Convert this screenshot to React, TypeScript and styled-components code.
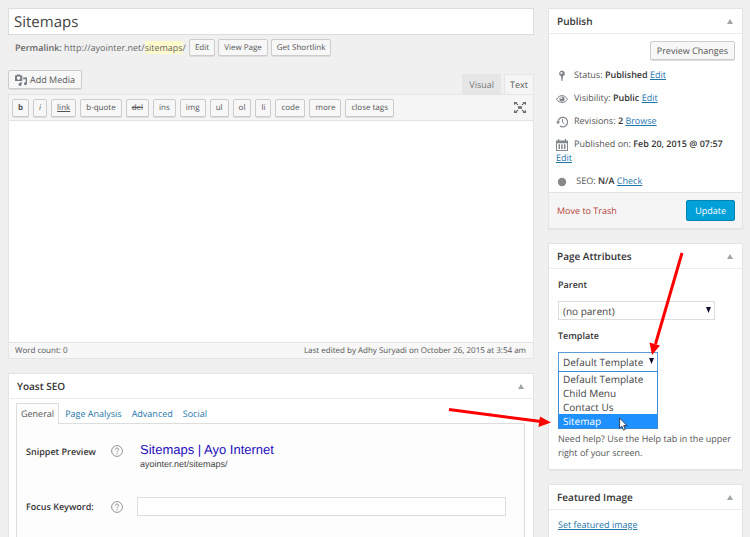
import React from 'react';
import styled, { createGlobalStyle, css } from 'styled-components';

const GlobalStyle = createGlobalStyle`
  *, *::before, *::after { box-sizing: border-box; }
  body {
    margin: 0;
    background: #f0f0f0;
    color: #555;
    font-family: 'Open Sans', 'Noto Sans', sans-serif;
    font-size: 9px;
    line-height: 14px;
    text-rendering: geometricPrecision;
  }
  button, input, select, textarea { font: inherit; color: inherit; margin: 0; text-rendering: inherit; }
  h2, p, ul { margin: 0; padding: 0; }
  ul { list-style: none; }
`;

const Page = styled.div`
  display: grid;
  grid-template-columns: minmax(0, 1fr) 195px;
  align-items: start;
  gap: 14px;
  height: 100vh;
  padding: 8px 7px 0 8px;
  overflow: hidden;
`;

const Column = styled.div`
  display: flex;
  flex-direction: column;
  gap: 14px;
`;

const PostForm = styled.div`
  display: flex;
  flex-direction: column;
`;

const TitleInput = styled.input`
  width: 100%;
  height: 27px;
  padding: 0 5px;
  border: 1px solid #ddd;
  background: #fff;
  color: #444;
  font-size: 15px;
`;

const PermalinkRow = styled.div`
  display: flex;
  align-items: center;
  gap: 3px;
  margin-top: 4px;
  padding-left: 7px;
  color: #666;
  strong { font-weight: 600; }
`;

const Slug = styled.span`
  background: #fffbcc;
`;

type ButtonSize = 'tiny' | 'quick' | 'normal';

const buttonSizes = {
  tiny: css`height: 17px; padding: 0 5px; font-size: 8px;`,
  quick: css`height: 18px; padding: 0 5px; font-size: 8px;`,
  normal: css`height: 19px; padding: 0 6px;`,
};

const Button = styled.button<{ $size: ButtonSize; $look?: 'bold' | 'italic' | 'link' | 'del' }>`
  display: inline-flex;
  align-items: center;
  gap: 3px;
  flex: none;
  border: 1px solid #ccc;
  border-radius: 2px;
  background: #f7f7f7;
  box-shadow: 0 1px 0 #ddd;
  color: #555;
  white-space: nowrap;
  ${({ $size }) => buttonSizes[$size]}
  ${({ $look }) => $look === 'bold' && css`font-weight: 700;`}
  ${({ $look }) => $look === 'italic' && css`font-style: italic;`}
  ${({ $look }) => $look === 'link' && css`text-decoration: underline;`}
  ${({ $look }) => $look === 'del' && css`text-decoration: line-through;`}
`;

const EditorTop = styled.div`
  display: flex;
  justify-content: space-between;
  align-items: flex-end;
  margin-top: 14px;
`;

const MediaSlot = styled.div`
  height: 24px;
`;

const EditorTabs = styled.div`
  display: flex;
  gap: 3px;
`;

const EditorTab = styled.button<{ $active?: boolean }>`
  height: 20px;
  padding: 0 ${({ $active }) => ($active ? 5 : 6)}px;
  border: 1px solid ${({ $active }) => ($active ? '#e5e5e5' : '#e6e6e6')};
  border-bottom: 0;
  background: ${({ $active }) => ($active ? '#f5f5f5' : '#e6e6e6')};
  color: ${({ $active }) => ($active ? '#555' : '#777')};
`;

const Editor = styled.div`
  display: flex;
  flex-direction: column;
  border: 1px solid #e5e5e5;
  background: #fff;
`;

const Toolbar = styled.div`
  display: flex;
  align-items: center;
  gap: 4px;
  height: 26px;
  padding: 0 7px 0 3px;
  border-bottom: 1px solid #e2e2e2;
  background: #f5f5f5;
`;

const FullscreenButton = styled.button`
  display: flex;
  margin-left: auto;
  padding: 0;
  border: 0;
  background: none;
`;

const EditorText = styled.textarea`
  display: block;
  height: 221px;
  padding: 6px;
  border: 0;
  resize: none;
  background: #fff;
  outline: 0;
`;

const EditorStatus = styled.div`
  display: flex;
  justify-content: space-between;
  padding: 1px 7px 0 6px;
  border-top: 1px solid #e2e2e2;
  background: #f7f7f7;
  color: #555;
  font-size: 8px;
`;

const Panel = styled.section`
  border: 1px solid #e4e4e4;
  background: #fff;
  box-shadow: 0 1px 1px rgba(0, 0, 0, 0.04);
`;

const PanelHeader = styled.header`
  display: flex;
  align-items: center;
  justify-content: space-between;
  height: 25px;
  padding: 0 9px 0 8px;
  border-bottom: 1px solid #ececec;
`;

const PanelTitle = styled.h2`
  color: #333;
  font-size: 10px;
  font-weight: 600;
`;

const Toggle = styled.button`
  display: flex;
  padding: 0;
  border: 0;
  background: none;
`;

const Link = styled.a<{ $danger?: boolean }>`
  color: ${({ $danger }) => ($danger ? '#b5423a' : '#1f76ab')};
  text-decoration: ${({ $danger }) => ($danger ? 'none' : 'underline')};
`;

const SeoBody = styled.div`
  padding: 4px 8px 0 7px;
`;

const SeoTabs = styled.nav`
  display: flex;
  gap: 8px;
`;

const SeoTab = styled.a<{ $active?: boolean }>`
  position: relative;
  margin-bottom: -1px;
  padding: 3px 0 3px;
  border: 1px solid transparent;
  border-bottom: 0;
  color: #1f76ab;
  text-decoration: none;
  ${({ $active }) =>
    $active &&
    css`
      padding: 3px 4px;
      margin-right: -3px;
      border-color: #ddd;
      background: #fdfdfd;
      color: #555;
    `}
`;

const SeoFields = styled.div`
  display: flex;
  flex-direction: column;
  gap: 26px;
  height: 160px;
  padding: 19px 18px 0 9px;
  border: 1px solid #ddd;
  background: #fdfdfd;
`;

const SeoRow = styled.div<{ $top?: boolean }>`
  display: grid;
  grid-template-columns: 85px 26px minmax(0, 1fr);
  align-items: ${({ $top }) => ($top ? 'start' : 'center')};
  svg { margin-top: ${({ $top }) => ($top ? 2 : 0)}px; }
`;

const SeoLabel = styled.label`
  color: #333;
  font-weight: 600;
`;

const SeoCaption = styled.span`
  padding-top: 2px;
  color: #333;
  font-weight: 600;
`;

const Snippet = styled.div`
  padding-left: 3px;
  font-family: 'Liberation Sans', Arial, sans-serif;
  color: #444;
`;

const SnippetTitle = styled.a`
  display: block;
  color: #1e0fbe;
  font-size: 13px;
  text-decoration: none;
`;

const KeywordInput = styled.input`
  height: 19px;
  width: 100%;
  border: 1px solid #ddd;
  background: #fff;
`;

const PublishBody = styled.div`
  display: flex;
  flex-direction: column;
  gap: 9px;
  padding: 7px 7px 4px;
`;

const PreviewRow = styled.div`
  display: flex;
  justify-content: flex-end;
  margin-bottom: -1px;
`;

const MetaRow = styled.div`
  line-height: 14px;
  svg { display: inline-block; vertical-align: -3px; margin: -1px 6px -1px 0; }
  strong { color: #333; font-weight: 600; }
`;

const PublishFooter = styled.footer`
  display: flex;
  align-items: center;
  justify-content: space-between;
  height: 36px;
  padding: 0 7px 0 8px;
  border-top: 1px solid #e2e2e2;
  background: #f5f5f5;
`;

const PrimaryButton = styled.button`
  height: 21px;
  padding: 0 8px;
  border: 1px solid #0084b4;
  border-radius: 2px;
  background: #00a0d8;
  color: #fff;
`;

const AttributesBody = styled.div`
  display: flex;
  flex-direction: column;
  align-items: flex-start;
  padding: 9px 8px 9px 9px;
`;

const FieldLabel = styled.label`
  margin-bottom: 9px;
  color: #333;
  font-weight: 600;
`;

const SelectField = styled.div<{ $wide?: boolean }>`
  position: relative;
  width: ${({ $wide }) => ($wide ? '157px' : '100px')};
  margin-bottom: ${({ $wide }) => ($wide ? '9px' : '60px')};
`;

const Select = styled.select<{ $focused?: boolean }>`
  display: block;
  width: 100%;
  height: ${({ $focused }) => ($focused ? 20 : 19)}px;
  padding: 0 4px;
  appearance: none;
  border: 1px solid ${({ $focused }) => ($focused ? '#5b9dd9' : '#ddd')};
  border-radius: 0;
  background: #fff;
  color: #444;
  font-size: 10px;
`;

const SelectArrow = styled.svg`
  position: absolute;
  right: 4px;
  top: 6px;
  pointer-events: none;
`;

const Options = styled.ul`
  position: absolute;
  top: 100%;
  left: 0;
  right: 0;
  margin-top: -1px;
  border: 1px solid #3c8bd6;
  background: #fff;
  font-size: 10px;
`;

const Option = styled.li<{ $selected?: boolean }>`
  padding: 0 4px;
  background: ${({ $selected }) => ($selected ? '#1e90ff' : '#fff')};
  color: ${({ $selected }) => ($selected ? '#fff' : '#444')};
`;

const Pointer = styled.svg`
  position: absolute;
  left: 61px;
  top: 65px;
`;

const ArrowDown = styled.svg`
  position: absolute;
  left: 90px;
  top: -100px;
  z-index: 2;
  pointer-events: none;
`;

const ArrowRight = styled.svg`
  position: absolute;
  left: -111px;
  top: 53px;
  z-index: 2;
  pointer-events: none;
`;

const FeaturedBody = styled.div`
  padding: 8px 9px 40px;
`;

const UpIcon = () => (
  <svg width="6" height="5" viewBox="0 0 6 5" aria-hidden="true">
    <path d="M3 0 6 5H0Z" fill="#a0a5aa" />
  </svg>
);

const DownIcon = () => (
  <SelectArrow width="5" height="6" viewBox="0 0 5 6" aria-hidden="true">
    <path d="M0 0h5L2.5 6Z" fill="#111133" />
  </SelectArrow>
);

const MediaIcon = () => (
  <svg width="12" height="12" viewBox="0 0 12 12" aria-hidden="true">
    <path fillRule="evenodd" fill="#777c82" d="M0 1.5h1.3L2 .5h3l.7 1h1.6V7H0ZM3.6 2.3a1.8 1.8 0 1 0 0 3.6 1.8 1.8 0 0 0 0-3.6Z" />
    <path fill="#777c82" d="M8.2 3.4H12V9.7a1.5 1.5 0 1 1-1.3-1.5V5.2H8.2ZM5.3 8h1.3v2.5A1.5 1.5 0 1 1 5.3 9Z" />
  </svg>
);

const FullscreenIcon = () => (
  <svg width="12" height="11" viewBox="0 0 12 11" fill="#666" aria-hidden="true">
    <path d="M0 0h3.4L2.5.9l1.9 1.7-.8.8-1.9-1.8L0 3.2ZM12 0v3.2l-1.7-1.6-1.9 1.8-.8-.8L9.5.9 8.6 0ZM0 11V7.8l1.7 1.6 1.9-1.8.8.8-1.9 1.7.9.9ZM12 11H8.6l.9-.9-1.9-1.7.8-.8 1.9 1.8L12 7.8ZM4 4.2h4v2.6H4Z" />
  </svg>
);

const PinIcon = () => (
  <svg width="12" height="12" viewBox="0 0 12 12" fill="#82878c" aria-hidden="true">
    <path fillRule="evenodd" d="M6 .5a3 3 0 0 1 1 5.8L6.5 11h-1L5 6.3A3 3 0 0 1 6 .5ZM5.4 2a1 1 0 1 0 0 2 1 1 0 0 0 0-2Z" />
  </svg>
);

const EyeIcon = () => (
  <svg width="12" height="12" viewBox="0 0 12 12" fill="none" stroke="#82878c" aria-hidden="true">
    <path d="M.5 6.2C3.2 1.4 8.8 1.4 11.5 6.2 8.8 10.6 3.2 10.6.5 6.2Z" />
    <circle cx="6" cy="6" r="2.6" fill="#82878c" stroke="none" />
    <circle cx="5.2" cy="5" r=".9" fill="#fff" stroke="none" />
  </svg>
);

const HistoryIcon = () => (
  <svg width="12" height="12" viewBox="0 0 12 12" fill="none" stroke="#82878c" aria-hidden="true">
    <path d="M2 6A4.8 4.8 0 1 1 4 10" strokeWidth="1.2" />
    <path d="M6.5 3v3.2l2 1.8" />
    <path d="M0 5.5h4.2L2 8.2Z" fill="#82878c" stroke="none" />
  </svg>
);

const CalendarIcon = () => (
  <svg width="12" height="12" viewBox="0 0 12 12" fill="#82878c" aria-hidden="true">
    <path fillRule="evenodd" d="M0 1.5h2V0h1.2v1.5h5.6V0H10v1.5h2V12H0ZM1 4.2V11h10V4.2Z" />
    <path d="M2.5 5.2H4V10H2.5ZM5.2 5.2h1.5V10H5.2ZM8 5.2h1.5V10H8Z" />
  </svg>
);

const DotIcon = () => (
  <svg width="12" height="12" viewBox="0 0 12 12" aria-hidden="true">
    <circle cx="6" cy="6" r="4.2" fill="#888" />
  </svg>
);

const HelpIcon = () => (
  <svg width="12" height="12" viewBox="0 0 12 12" fill="none" stroke="#888" aria-hidden="true">
    <circle cx="6" cy="6" r="5.4" strokeWidth=".9" />
    <path d="M4.3 4.6C4.4 2.5 7.7 2.6 7.6 4.6 7.5 5.6 6 5.8 6 7.2" />
    <path d="M6 8.2v1" />
  </svg>
);

type QuickTag = { text: string; look?: 'bold' | 'italic' | 'link' | 'del' };

const quickTags: QuickTag[] = [
  { text: 'b', look: 'bold' },
  { text: 'i', look: 'italic' },
  { text: 'link', look: 'link' },
  { text: 'b-quote' },
  { text: 'del', look: 'del' },
  { text: 'ins' },
  { text: 'img' },
  { text: 'ul' },
  { text: 'ol' },
  { text: 'li' },
  { text: 'code' },
  { text: 'more' },
  { text: 'close tags' },
];

const templates = ['Default Template', 'Child Menu', 'Contact Us', 'Sitemap'];

const Header = ({ title }: { title: string }) => (
  <PanelHeader>
    <PanelTitle>{title}</PanelTitle>
    <Toggle type="button" aria-label={`Toggle panel: ${title}`}>
      <UpIcon />
    </Toggle>
  </PanelHeader>
);

export default function App() {
  return (
    <>
      <GlobalStyle />
      <Page>
        <Column as="main">
          <PostForm>
            <TitleInput aria-label="Title" defaultValue="Sitemaps" />
            <PermalinkRow>
              <span>
                <strong>Permalink:</strong> http://ayointer.net/<Slug>sitemaps</Slug>/
              </span>
              <Button type="button" $size="tiny">Edit</Button>
              <Button type="button" $size="tiny">View Page</Button>
              <Button type="button" $size="tiny">Get Shortlink</Button>
            </PermalinkRow>
            <EditorTop>
              <MediaSlot>
                <Button type="button" $size="normal">
                  <MediaIcon />
                  Add Media
                </Button>
              </MediaSlot>
              <EditorTabs>
                <EditorTab type="button">Visual</EditorTab>
                <EditorTab type="button" $active>Text</EditorTab>
              </EditorTabs>
            </EditorTop>
            <Editor>
              <Toolbar>
                {quickTags.map(({ text, look }) => (
                  <Button key={text} type="button" $size="quick" $look={look}>{text}</Button>
                ))}
                <FullscreenButton type="button" aria-label="Distraction-free writing mode">
                  <FullscreenIcon />
                </FullscreenButton>
              </Toolbar>
              <EditorText aria-label="Content" />
              <EditorStatus>
                <span>Word count: 0</span>
                <span>Last edited by Adhy Suryadi on October 26, 2015 at 3:54 am</span>
              </EditorStatus>
            </Editor>
          </PostForm>

          <Panel>
            <Header title="Yoast SEO" />
            <SeoBody>
              <SeoTabs>
                <SeoTab href="#general" $active>General</SeoTab>
                <SeoTab href="#analysis">Page Analysis</SeoTab>
                <SeoTab href="#advanced">Advanced</SeoTab>
                <SeoTab href="#social">Social</SeoTab>
              </SeoTabs>
              <SeoFields>
                <SeoRow $top>
                  <SeoCaption>Snippet Preview</SeoCaption>
                  <HelpIcon />
                  <Snippet>
                    <SnippetTitle href="#snippet">Sitemaps | Ayo Internet</SnippetTitle>
                    ayointer.net/sitemaps/
                  </Snippet>
                </SeoRow>
                <SeoRow>
                  <SeoLabel htmlFor="keyword">Focus Keyword:</SeoLabel>
                  <HelpIcon />
                  <KeywordInput id="keyword" />
                </SeoRow>
              </SeoFields>
            </SeoBody>
          </Panel>
        </Column>

        <Column as="aside">
          <Panel>
            <Header title="Publish" />
            <PublishBody>
              <PreviewRow>
                <Button type="button" $size="normal">Preview Changes</Button>
              </PreviewRow>
              <MetaRow><PinIcon />Status: <strong>Published</strong> <Link href="#status">Edit</Link></MetaRow>
              <MetaRow><EyeIcon />Visibility: <strong>Public</strong> <Link href="#visibility">Edit</Link></MetaRow>
              <MetaRow><HistoryIcon />Revisions: <strong>2</strong> <Link href="#revisions">Browse</Link></MetaRow>
              <MetaRow>
                <CalendarIcon />Published on: <strong>Feb 20, 2015 @ 07:57</strong>{' '}
                <Link href="#date">Edit</Link>
              </MetaRow>
              <MetaRow><DotIcon /> SEO: <strong>N/A</strong> <Link href="#seo">Check</Link></MetaRow>
            </PublishBody>
            <PublishFooter>
              <Link href="#trash" $danger>Move to Trash</Link>
              <PrimaryButton type="button">Update</PrimaryButton>
            </PublishFooter>
          </Panel>

          <Panel>
            <Header title="Page Attributes" />
            <AttributesBody>
              <FieldLabel htmlFor="parent">Parent</FieldLabel>
              <SelectField $wide>
                <Select id="parent" defaultValue="none">
                  <option value="none">(no parent)</option>
                </Select>
                <DownIcon />
              </SelectField>
              <FieldLabel htmlFor="template">Template</FieldLabel>
              <SelectField>
                <Select id="template" $focused defaultValue={templates[0]}>
                  {templates.map((name) => <option key={name}>{name}</option>)}
                </Select>
                <DownIcon />
                <Options role="listbox" aria-label="Template">
                  {templates.map((name) => (
                    <Option key={name} role="option" aria-selected={name === 'Sitemap'} $selected={name === 'Sitemap'}>
                      {name}
                    </Option>
                  ))}
                </Options>
                <Pointer width="9" height="14" viewBox="0 0 9 14" aria-hidden="true">
                  <path d="M.6 1v10.2l2.3-2 1.6 3.9 1.8-.7-1.6-3.8h3.2Z" fill="#fff" stroke="#223" strokeWidth=".8" />
                </Pointer>
                <ArrowDown width="38" height="104" viewBox="0 0 38 104" aria-hidden="true">
                  <path d="M34 1 7.5 92" stroke="#f00" strokeWidth="3" />
                  <path d="M1.5 90.5 12 93.5 4 103Z" fill="#f00" />
                </ArrowDown>
                <ArrowRight width="105" height="24" viewBox="0 0 105 24" aria-hidden="true">
                  <path d="M2 4.5 94 16.5" stroke="#f00" strokeWidth="3" />
                  <path d="M93 11.5 104 17.5 91.5 22Z" fill="#f00" />
                </ArrowRight>
              </SelectField>
              <p>Need help? Use the Help tab in the upper right of your screen.</p>
            </AttributesBody>
          </Panel>

          <Panel>
            <Header title="Featured Image" />
            <FeaturedBody>
              <Link href="#featured">Set featured image</Link>
            </FeaturedBody>
          </Panel>
        </Column>
      </Page>
    </>
  );
}
